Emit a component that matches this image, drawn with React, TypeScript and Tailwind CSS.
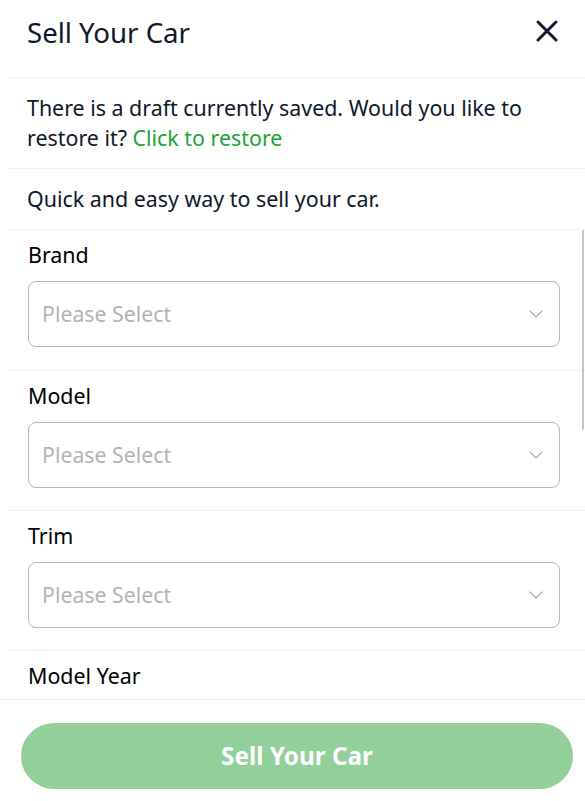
import React from 'react';
import { X, ChevronDown } from 'lucide-react';

const fields = ['Brand', 'Model', 'Trim'];

const SelectField: React.FC<{ label: string; first?: boolean }> = ({ label, first }) => (
  <div className={`ml-[6px] pl-[22px] pr-[25px] pt-[11px] border-b border-[#f0f0f0] ${first ? 'pb-[23px]' : 'pb-[22px]'}`}>
    <div className="text-[21.4px] leading-[28px] text-black">{label}</div>
    <div className="mt-[12px] h-[66px] rounded-[8px] border border-[#b5b5b5] flex items-center justify-between pl-[13px] pr-[11px]">
      <span className="text-[21.3px] text-[#b3b3b3]">Please Select</span>
      <ChevronDown size={24} strokeWidth={1.3} className="text-[#b0b0b0]" />
    </div>
  </div>
);

export default function App() {
  return (
    <div className="w-[585px] h-[801px] bg-white flex flex-col" style={{ fontFamily: '"Noto Sans", "Open Sans", sans-serif' }}>
      <div className="h-[78px] shrink-0 flex items-start justify-between ml-[6px] pl-[21px] pr-[20px] pt-[14px] border-b border-[#f0f0f0]">
        <h1 className="text-[27.6px] leading-[36px] text-[#0f172a]">Sell Your Car</h1>
        <X size={36} strokeWidth={2} className="text-[#0f172a] -mt-[1px]" />
      </div>
      <div className="shrink-0 ml-[6px] pl-[21px] pr-[20px] py-[15px] border-b border-[#f0f0f0] text-[21.4px] leading-[30px] text-[#0f172a]">
        There is a draft currently saved. Would you like to restore it?{' '}
        <span className="text-[#22a33a]">Click to restore</span>
      </div>
      <div className="shrink-0 ml-[6px] pl-[21px] h-[61px] flex items-center border-b border-[#f0f0f0] text-[21.4px] text-[#0f172a]">
        Quick and easy way to sell your car.
      </div>
      <div className="relative h-[470px] shrink-0 overflow-hidden border-b border-[#f0f0f0]">
        {fields.map((f, i) => (
          <SelectField key={f} label={f} first={i === 0} />
        ))}
        <div className="ml-[6px] pl-[22px] pt-[11px]">
          <div className="text-[21.4px] leading-[28px] text-black">Model Year</div>
        </div>
        <div className="absolute right-[1px] top-0 w-[2px] h-[200px] bg-[#c4c4c4] rounded-full" />
      </div>
      <div className="flex-1 px-[21px] pt-[23px]">
        <button className="w-[552px] h-[66px] rounded-full bg-[#93d09b] text-white text-[24.3px] font-bold">
          Sell Your Car
        </button>
      </div>
    </div>
  );
}
